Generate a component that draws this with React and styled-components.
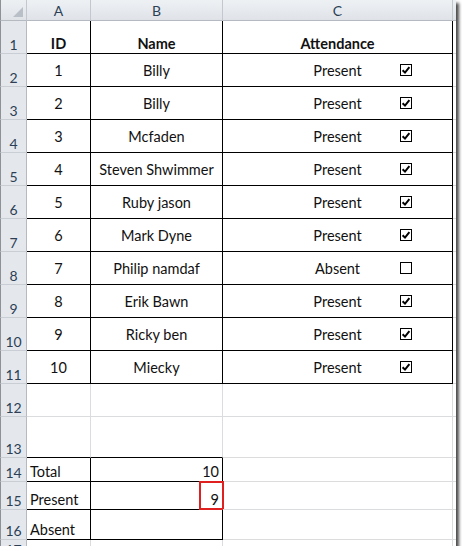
import React from 'react';
import styled, { createGlobalStyle } from 'styled-components';

const GlobalStyle = createGlobalStyle`
	html, body {
		margin: 0;
		padding: 0;
		background: #ffffff;
	}
`;

const ROW_HEIGHTS = [21, 33, 33, 33, 33, 33, 33, 33, 33, 33, 33, 33, 33, 41, 24, 28, 30, 20];

const people = [
	[1, 'Billy', true],
	[2, 'Billy', true],
	[3, 'Mcfaden', true],
	[4, 'Steven Shwimmer', true],
	[5, 'Ruby jason', true],
	[6, 'Mark Dyne', true],
	[7, 'Philip namdaf', false],
	[8, 'Erik Bawn', true],
	[9, 'Ricky ben', true],
	[10, 'Miecky', true],
];

function CheckBox({ checked }) {
	return (
		<StyledCheck>
			{checked && (
				<svg width='10' height='10' viewBox='0 0 10 10'>
					<path
						d='M1.6 5.2 L4 7.6 L8.4 2.2'
						fill='none'
						stroke='#000'
						strokeWidth='2'
					/>
				</svg>
			)}
		</StyledCheck>
	);
}

export default function App() {
	return (
		<>
			<GlobalStyle />
			<Frame>
				<Sheet>
					<Corner>
						<svg width='10' height='10' viewBox='0 0 10 10'>
							<polygon points='10,0 10,10 0,10' fill='#b9bfc7' />
						</svg>
					</Corner>
					<ColHead>A</ColHead>
					<ColHead>B</ColHead>
					<ColHead>C</ColHead>
					<ColHead $last />

					<RowHead>1</RowHead>
					<Cell $edge $bold $valign='end'>ID</Cell>
					<Cell $edge $bold $valign='end'>Name</Cell>
					<Cell $edge $bold $valign='end'>Attendance</Cell>
					<Cell />

					{people.map(([id, name, present], i) => (
						<React.Fragment key={id}>
							<RowHead>{i + 2}</RowHead>
							<Cell $edge>{id}</Cell>
							<Cell $edge>{name}</Cell>
							<Cell $edge>
								{present ? 'Present' : 'Absent'}
								<CheckBox checked={present} />
							</Cell>
							<Cell />
						</React.Fragment>
					))}

					<RowHead>12</RowHead>
					<Cell />
					<Cell />
					<Cell />
					<Cell />

					<RowHead>13</RowHead>
					<Cell $bottomEdge />
					<Cell $bottomEdge />
					<Cell />
					<Cell />

					<RowHead>14</RowHead>
					<Cell $edge $align='start' $valign='end'>Total</Cell>
					<Cell $edge $align='end' $valign='end'>10</Cell>
					<Cell />
					<Cell />

					<RowHead>15</RowHead>
					<Cell $edge $align='start' $valign='end'>Present</Cell>
					<Cell $edge $align='end' $valign='end'>
						9
						<Highlight />
					</Cell>
					<Cell />
					<Cell />

					<RowHead>16</RowHead>
					<Cell $edge $align='start' $valign='end'>Absent</Cell>
					<Cell $edge $align='end' $valign='end' />
					<Cell />
					<Cell />

					<RowHead $top>17</RowHead>
					<Cell />
					<Cell />
					<Cell />
					<Cell />
				</Sheet>
			</Frame>
		</>
	);
}

const Frame = styled.div`
	width: 456px;
	height: 546px;
	overflow: hidden;
	background: #ffffff;
	box-shadow: 3px 3px 3px rgba(0, 0, 0, 0.7);
	font-family: Lato, 'Open Sans', sans-serif;
	font-size: 14.5px;
	color: #111;
`;

const Sheet = styled.div`
	display: grid;
	grid-template-columns: 27px 64px 132px 230px 40px;
	grid-template-rows: ${ROW_HEIGHTS.map((h) => `${h}px`).join(' ')};
`;

const Corner = styled.div`
	background: linear-gradient(#edf0f3, #dfe3e8);
	border-left: 1px solid #8e9297;
	border-right: 1px solid #c3c8cf;
	border-bottom: 1px solid #b5bac1;
	display: flex;
	align-items: flex-end;
	justify-content: flex-end;
	padding: 0 3px 3px 0;
`;

const ColHead = styled.div`
	background: linear-gradient(#eef1f4, #dfe3e8);
	border-right: 1px solid ${(p) => (p.$last ? 'transparent' : '#c3c8cf')};
	border-bottom: 1px solid #b5bac1;
	display: flex;
	align-items: center;
	justify-content: center;
	font-size: 14px;
	color: #2c3f55;
	padding-top: 1px;
`;

const RowHead = styled.div`
	background: #e4e8ed;
	border-left: 1px solid #8e9297;
	border-right: 1px solid #b5bac1;
	border-bottom: 1px solid #c9ced5;
	display: flex;
	align-items: ${(p) => (p.$top ? 'flex-start' : 'flex-end')};
	justify-content: center;
	padding-top: ${(p) => (p.$top ? '1px' : '0')};
	font-size: 14px;
	line-height: 17px;
	color: #2c3f55;
`;

const Cell = styled.div`
	position: relative;
	display: flex;
	align-items: ${(p) =>
		p.$valign === 'end' ? 'flex-end' : 'center'};
	justify-content: ${(p) =>
		p.$align === 'start'
			? 'flex-start'
			: p.$align === 'end'
			? 'flex-end'
			: 'center'};
	padding: ${(p) => (p.$valign === 'end' ? '0 3px 0 3px' : '1px 3px 0 3px')};
	line-height: 18px;
	border-right: 1px solid ${(p) => (p.$edge ? '#000' : '#dadcdd')};
	border-bottom: 1px solid
		${(p) => (p.$edge || p.$bottomEdge ? '#000' : '#dadcdd')};
	font-weight: ${(p) => (p.$bold ? 700 : 400)};
	white-space: nowrap;
`;

const StyledCheck = styled.span`
	position: absolute;
	left: 177px;
	top: 50%;
	margin-top: -6px;
	width: 10px;
	height: 10px;
	border: 1px solid #000;
	background: #fff;
	display: flex;
	align-items: center;
	justify-content: center;
`;

const Highlight = styled.span`
	position: absolute;
	right: -2px;
	top: -1px;
	width: 21px;
	height: 25px;
	border: 2px solid #e0201e;
`;
